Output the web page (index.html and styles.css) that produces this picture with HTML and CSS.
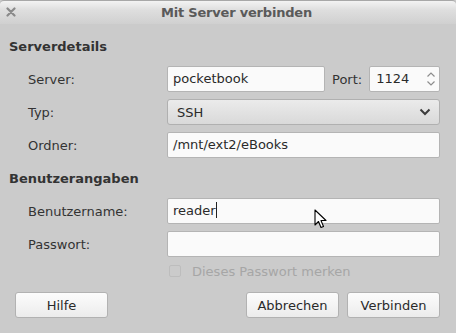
FILE: index.html
```html
<!DOCTYPE html>
<html>
<head>
<meta charset="utf-8">
<link rel="stylesheet" href="styles.css">
</head>
<body>
<div class="window">
  <div class="titlebar">
    <span class="close">
      <svg width="10" height="10" viewBox="0 0 10 10"><path d="M1.5 1.5 L8.5 8.5 M8.5 1.5 L1.5 8.5" stroke="#8a8a8a" stroke-width="2.2" stroke-linecap="round"/></svg>
    </span>
    <span class="title">Mit Server verbinden</span>
  </div>
  <div class="content">
    <div class="heading h1">Serverdetails</div>
    <div class="grid">
      <label class="label">Server:</label>
      <div class="row-fields">
        <div class="entry server">pocketbook</div>
        <span class="port-label">Port:</span>
        <div class="entry spin">1124
          <span class="spin-arrows">
            <svg width="10" height="16" viewBox="0 0 10 16"><path d="M1.5 5.5 L5 2 L8.5 5.5" fill="none" stroke="#8d8d8d" stroke-width="1.2"/><path d="M1.5 10.5 L5 14 L8.5 10.5" fill="none" stroke="#8d8d8d" stroke-width="1.2"/></svg>
          </span>
        </div>
      </div>
      <label class="label">Typ:</label>
      <div class="combo"><span>SSH</span>
        <svg width="12" height="8" viewBox="0 0 12 8"><path d="M1.5 1.5 L6 6 L10.5 1.5" fill="none" stroke="#3c3c3c" stroke-width="2"/></svg>
      </div>
      <label class="label">Ordner:</label>
      <div class="entry">/mnt/ext2/eBooks</div>
    </div>
    <div class="heading h2">Benutzerangaben</div>
    <div class="grid">
      <label class="label">Benutzername:</label>
      <div class="entry">reader<span class="caret"></span>
        <svg class="cursor" width="14" height="22" viewBox="0 0 14 22"><path d="M1 1 L1 16 L4.5 12.5 L7 18.5 L9.5 17.5 L7 11.5 L12 11.5 Z" fill="#fff" stroke="#000" stroke-width="1.1" stroke-linejoin="round"/></svg>
      </div>
      <label class="label">Passwort:</label>
      <div class="entry"></div>
      <span></span>
      <div class="check-row"><span class="checkbox"></span><span class="check-text">Dieses Passwort merken</span></div>
    </div>
    <div class="buttons">
      <button class="btn help">Hilfe</button>
      <div class="right-buttons">
        <button class="btn">Abbrechen</button>
        <button class="btn">Verbinden</button>
      </div>
    </div>
  </div>
</div>
</body>
</html>
```

FILE: styles.css
```css
html, body {
  margin: 0;
  padding: 0;
  background: #cccccc;
}
body {
  font-family: "DejaVu Sans", "Noto Sans", sans-serif;
  font-size: 13px;
  color: #333333;
}
.window {
  width: 456px;
  height: 333px;
  background: #cbcbcb;
  overflow: hidden;
}
.titlebar {
  position: relative;
  height: 24px;
  background: linear-gradient(#f3f3f3, #dedede 40%, #d0d0d0);
  border-top: 1px solid #a8a8a8;
  box-sizing: border-box;
  border-radius: 4px 4px 0 0;
  display: flex;
  align-items: center;
  justify-content: center;
}
.close {
  position: absolute;
  left: 6px;
  top: 6px;
  width: 10px;
  height: 10px;
  display: flex;
}
.title {
  font-weight: bold;
  font-size: 13px;
  color: #5a5a5a;
  margin-left: 17px;
  letter-spacing: -0.2px;
}
.content {
  padding: 0 16px 0 9px;
}
.heading {
  font-weight: bold;
  color: #333333;
  height: 20px;
  line-height: 20px;
}
.h1 { margin-top: 13px; }
.h2 { margin-top: 11px; }
.grid {
  display: grid;
  grid-template-columns: 158px 1fr;
  row-gap: 7px;
  margin-top: 9px;
}
.label {
  padding-left: 19px;
  display: flex;
  align-items: center;
  height: 26px;
}
.row-fields {
  display: flex;
  align-items: center;
}
.entry {
  position: relative;
  height: 26px;
  box-sizing: border-box;
  border: 1px solid #b4b4b4;
  border-radius: 2px;
  background: #fafafa;
  padding-left: 5px;
  line-height: 24px;
  color: #2a2a2a;
}
.entry.server {
  width: 158px;
  flex: none;
}
.port-label {
  margin-left: 7px;
  margin-right: 7px;
}
.entry.spin {
  flex: 1;
  padding-left: 6px;
}
.spin-arrows {
  position: absolute;
  right: 3px;
  top: 4px;
  display: flex;
}
.combo {
  height: 26px;
  box-sizing: border-box;
  border: 1px solid #b0b0b0;
  border-radius: 3px;
  background: linear-gradient(#ebebeb, #d9d9d9);
  display: flex;
  align-items: center;
  justify-content: space-between;
  padding: 0 8px 0 9px;
  color: #2a2a2a;
}
.caret {
  display: inline-block;
  width: 1px;
  height: 16px;
  background: #222;
  vertical-align: -3px;
}
.cursor {
  position: absolute;
  left: 146px;
  top: 10px;
}
.check-row {
  display: flex;
  align-items: center;
  height: 20px;
  margin-top: -3px;
}
.checkbox {
  width: 10px;
  height: 10px;
  border: 1px solid #bdbdbd;
  border-radius: 2px;
  margin-left: 2px;
  margin-right: 11px;
}
.check-text {
  color: #a6a6a6;
}
.buttons {
  display: flex;
  justify-content: space-between;
  margin-top: 11px;
  padding-left: 6px;
}
.right-buttons {
  display: flex;
  gap: 8px;
}
.btn {
  font-family: inherit;
  font-size: 13px;
  color: #2a2a2a;
  height: 26px;
  width: 93px;
  border: 1px solid #b2b2b2;
  border-radius: 3px;
  background: linear-gradient(#fcfcfc, #ececec);
  padding: 0;
}
```
